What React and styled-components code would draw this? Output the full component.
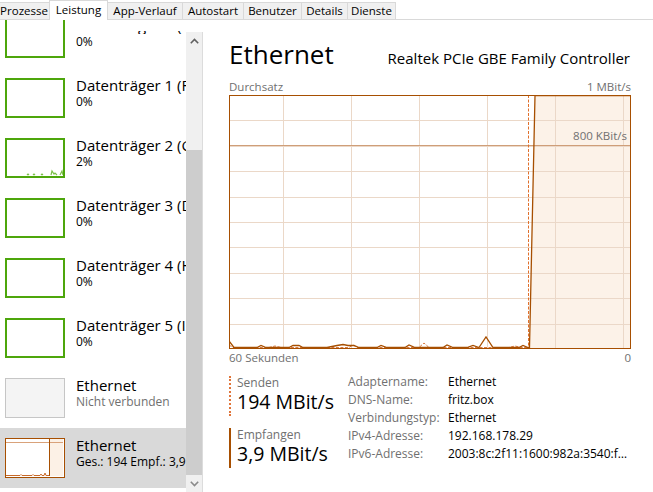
import { Fragment } from "react";
import styled, { createGlobalStyle } from "styled-components";

const GlobalStyle = createGlobalStyle`
  html, body {
    margin: 0;
    padding: 0;
    background: #ffffff;
  }
  body {
    font-family: "Segoe UI", "Open Sans", "Noto Sans", sans-serif;
    color: #000000;
  }
`;

const ORANGE = "#a74f01";
const GREEN = "#4da60c";
const GRAY_TEXT = "#707070";

const Window = styled.div`
  width: 653px;
  height: 492px;
  display: flex;
  flex-direction: column;
  overflow: hidden;
  background: #ffffff;
`;

/* ---------- tabs ---------- */

const TabBar = styled.div`
  height: 20px;
  display: flex;
  align-items: flex-end;
  flex-shrink: 0;
  box-shadow: inset 0 -1px 0 #d9d9d9;
`;

const Tab = styled.div`
  width: ${(p) => p.$w}px;
  height: ${(p) => (p.$active ? 20 : 18)}px;
  box-sizing: border-box;
  display: flex;
  align-items: ${(p) => (p.$active ? "flex-start" : "center")};
  justify-content: center;
  font-size: 11.5px;
  line-height: 16px;
  background: ${(p) => (p.$active ? "#ffffff" : "#f0f0f0")};
  border: 1px solid #d9d9d9;
  border-left: ${(p) => (p.$first ? "none" : "1px solid #d9d9d9")};
  border-bottom: ${(p) => (p.$active ? "none" : "1px solid #d9d9d9")};
  margin-left: -1px;
  padding-top: ${(p) => (p.$active ? 1 : 0)}px;
  white-space: nowrap;
  overflow: hidden;
`;

const tabs = [
  ["Prozesse", 51],
  ["Leistung", 59],
  ["App-Verlauf", 76],
  ["Autostart", 62],
  ["Benutzer", 59],
  ["Details", 47],
  ["Dienste", 49],
];

/* ---------- left list ---------- */

const Body = styled.div`
  flex: 1;
  display: flex;
  min-height: 0;
`;

const LeftPane = styled.div`
  width: 203px;
  display: flex;
  flex-shrink: 0;
`;

const List = styled.div`
  width: 186px;
  overflow: hidden;
`;

const ListInner = styled.div`
  margin-top: -12px;
`;

const Item = styled.div`
  height: 60px;
  box-sizing: border-box;
  padding: 10px 0 10px 5px;
  display: flex;
  gap: 11px;
  background: ${(p) => (p.$selected ? "#d9d9d9" : "transparent")};
`;

const Thumb = styled.div`
  width: 60px;
  height: 40px;
  flex-shrink: 0;
  box-sizing: border-box;
  border: ${(p) =>
    p.$kind === "off"
      ? "1px solid #c6c6c6"
      : p.$kind === "net"
      ? `1.5px solid ${ORANGE}`
      : `2px solid ${GREEN}`};
  background: ${(p) => (p.$kind === "off" ? "#f4f4f4" : "#ffffff")};
  overflow: hidden;
  svg {
    display: block;
  }
`;

const ItemText = styled.div`
  min-width: 0;
  display: flex;
  flex-direction: column;
  white-space: nowrap;
  overflow: hidden;
`;

const ItemTitle = styled.div`
  font-size: 15px;
  line-height: 18px;
  margin-top: -2px;
  clip-path: ${(p) => (p.$clipped ? "inset(15px 0 0 0)" : "none")};
`;

const ItemSub = styled.div`
  font-size: 12px;
  line-height: 15px;
  color: ${(p) => (p.$muted ? GRAY_TEXT : "#000000")};
`;

const Scrollbar = styled.div`
  width: 16px;
  margin-top: 12px;
  background: #f0f0f0;
  border-right: 1px solid #dcdcdc;
  display: flex;
  flex-direction: column;
`;

const ScrollArrow = styled.div`
  height: 17px;
  display: flex;
  align-items: center;
  justify-content: center;
  flex-shrink: 0;
`;

const ScrollTrack = styled.div`
  flex: 1;
  display: flex;
  flex-direction: column;
  padding-top: 101px;
`;

const ScrollThumb = styled.div`
  flex: 1;
  background: #cdcdcd;
`;

const Chevron = ({ up, color }) => (
  <svg width="9" height="6" viewBox="0 0 9 6">
    <path
      d={up ? "M0.8 5.2 L4.5 1.5 L8.2 5.2" : "M0.8 0.8 L4.5 4.5 L8.2 0.8"}
      fill="none"
      stroke={color}
      strokeWidth="1.6"
    />
  </svg>
);

const DiskSpark = () => (
  <svg width="56" height="36" viewBox="0 0 56 36">
    <path
      d="M20 35 L21 34 L22 35 M26 35 L27 34 L28 35 M34 35 L35 34 L36 35 M44 35 L45 31 L47 34 L48 33 L50 35 M53 35 L55 31 L56 35"
      fill="none"
      stroke="#7cc04a"
      strokeWidth="1.2"
    />
  </svg>
);

const NetSpark = () => (
  <svg width="57" height="37" viewBox="0 0 57 37">
    <rect x="43" y="0" width="14" height="37" fill="#fcf1e6" />
    <line x1="0" y1="3.5" x2="57" y2="3.5" stroke="#d9a27a" strokeWidth="1" />
    <line x1="43.5" y1="0" x2="43.5" y2="37" stroke={ORANGE} strokeWidth="1" />
    <path
      d="M0 36.5 L14 36.5 L15 35.5 L16 36.5 L26 36.5 L27 35.5 L28 36.5 L34 36.5 L35 35 L36 36.5 L38 36.5 L39 34 L40 36.5 L43 36.5"
      fill="none"
      stroke="#c86a2a"
      strokeWidth="1"
    />
  </svg>
);

const disks = [
  { title: "Datenträger 0 (C:)", sub: "0%" },
  { title: "Datenträger 1 (F:)", sub: "0%" },
  { title: "Datenträger 2 (G:)", sub: "2%", spark: true },
  { title: "Datenträger 3 (D:)", sub: "0%" },
  { title: "Datenträger 4 (H:)", sub: "0%" },
  { title: "Datenträger 5 (I:)", sub: "0%" },
];

/* ---------- right pane ---------- */

const RightPane = styled.div`
  flex: 1;
  min-width: 0;
  padding: 17px 22px 0 26px;
  display: flex;
  flex-direction: column;
`;

const Header = styled.div`
  display: flex;
  justify-content: space-between;
  align-items: baseline;
  height: 34px;
`;

const Title = styled.div`
  font-size: 26px;
  line-height: 34px;
  font-weight: 400;
`;

const Subtitle = styled.div`
  font-size: 15px;
  line-height: 20px;
  margin-right: 1px;
`;

const AxisRow = styled.div`
  display: flex;
  justify-content: space-between;
  font-size: 11.5px;
  line-height: 14px;
  color: ${GRAY_TEXT};
  margin-top: ${(p) => p.$top}px;
`;

const Chart = styled.div`
  position: relative;
  width: 402px;
  height: 254px;
  margin-top: 1px;
  svg {
    display: block;
  }
`;

const ChartNote = styled.div`
  position: absolute;
  right: 4px;
  top: 34px;
  font-size: 11.5px;
  line-height: 14px;
  color: ${GRAY_TEXT};
`;

const W = 402;
const H = 254;
const vLines = [54, 122, 190, 258, 326, 394];
const hLines = [1, 2, 3, 4, 5, 6, 7, 8, 9].map((k) => Math.round((H * k) / 10));

const recvPts = [
  [0, 246], [5, 252.5], [28, 252.5], [32, 250.5], [37, 252.5], [60, 252.5], [64, 250.5],
  [70, 250.5], [74, 252.5], [98, 252.5], [108, 250.5], [114, 249.5], [119, 250.5], [125, 250.5],
  [130, 252.5], [148, 252.5], [152, 250.5], [158, 252.5], [176, 252.5], [180, 250], [186, 252.5],
  [214, 252.5], [218, 250], [224, 252.5], [238, 252.5], [244, 250.5], [250, 252.5], [257, 242],
  [264, 252.5], [290, 252.5], [294, 250.5], [299, 252.5], [300.5, 252.5], [306, 0.5], [402, 0.5],
];

const sendPts = [
  [0, 250], [4, 252.5], [40, 252.5], [46, 251], [52, 252.5], [120, 252.5], [124, 250], [128, 252.5],
  [190, 252.5], [195, 248], [200, 252.5], [280, 252.5], [286, 251], [292, 252.5], [299.5, 252.5],
];

const toStr = (pts) => pts.map(([x, y]) => `${x},${y}`).join(" ");

const ThroughputChart = () => (
  <Chart>
    <svg width={W} height={H} viewBox={`0 0 ${W} ${H}`}>
      <rect x="0" y="0" width={W} height={H} fill="#ffffff" />
      <polygon points={`300.5,${H} 306,0 ${W},0 ${W},${H}`} fill="#fcf2e8" />
      {vLines.map((x) => (
        <line key={x} x1={x + 0.5} y1="0" x2={x + 0.5} y2={H} stroke="#ebd8c8" strokeWidth="1" />
      ))}
      {hLines.map((y) => (
        <line key={y} x1="0" y1={y + 0.5} x2={W} y2={y + 0.5} stroke="#ebd8c8" strokeWidth="1" />
      ))}
      <line x1="0" y1="50.5" x2={W} y2="50.5" stroke="#cf9e78" strokeWidth="1.2" />
      <polyline
        points={toStr(sendPts)}
        fill="none"
        stroke="#d9793f"
        strokeWidth="1"
        strokeDasharray="3 1.5"
      />
      <line x1="299.5" y1="0" x2="299.5" y2={H} stroke="#e0702c" strokeWidth="1" strokeDasharray="3 1.5" />
      <polyline points={toStr(recvPts)} fill="none" stroke={ORANGE} strokeWidth="1.3" />
      <rect x="0.5" y="0.5" width={W - 1} height={H - 1} fill="none" stroke={ORANGE} strokeWidth="1" />
    </svg>
    <ChartNote>800 KBit/s</ChartNote>
  </Chart>
);

const Stats = styled.div`
  display: flex;
  margin-top: 11px;
`;

const Rates = styled.div`
  width: 119px;
  display: flex;
  flex-direction: column;
  gap: 12px;
  flex-shrink: 0;
`;

const Rate = styled.div`
  height: 40px;
  box-sizing: border-box;
  padding-left: 6px;
  border-left: 2px ${(p) => (p.$dotted ? "dotted #e0753a" : `solid ${ORANGE}`)};
  display: flex;
  flex-direction: column;
`;

const RateLabel = styled.div`
  font-size: 12px;
  line-height: 13px;
  color: ${GRAY_TEXT};
`;

const RateValue = styled.div`
  font-size: 19.5px;
  line-height: 26px;
  white-space: nowrap;
`;

const Props = styled.div`
  display: grid;
  grid-template-columns: 100px 1fr;
  grid-auto-rows: 18px;
  margin-top: -3px;
  font-size: 12px;
  line-height: 18px;
  min-width: 0;
`;

const PropKey = styled.div`
  color: ${GRAY_TEXT};
  white-space: nowrap;
`;

const PropVal = styled.div`
  white-space: nowrap;
  overflow: hidden;
  text-overflow: ellipsis;
`;

const props = [
  ["Adaptername:", "Ethernet"],
  ["DNS-Name:", "fritz.box"],
  ["Verbindungstyp:", "Ethernet"],
  ["IPv4-Adresse:", "192.168.178.29"],
  ["IPv6-Adresse:", "2003:8c:2f11:1600:982a:3540:f009:8c1e"],
];

export default function App() {
  return (
    <Window>
      <GlobalStyle />
      <TabBar>
        {tabs.map(([label, w], i) => (
          <Tab key={label} $w={w} $first={i === 0} $active={label === "Leistung"}>
            {label}
          </Tab>
        ))}
      </TabBar>
      <Body>
        <LeftPane>
          <List>
            <ListInner>
              {disks.map((d, i) => (
                <Item key={d.title}>
                  <Thumb $kind="disk">{d.spark && <DiskSpark />}</Thumb>
                  <ItemText>
                    <ItemTitle $clipped={i === 0}>{d.title}</ItemTitle>
                    <ItemSub>{d.sub}</ItemSub>
                  </ItemText>
                </Item>
              ))}
              <Item>
                <Thumb $kind="off" />
                <ItemText>
                  <ItemTitle>Ethernet</ItemTitle>
                  <ItemSub $muted>Nicht verbunden</ItemSub>
                </ItemText>
              </Item>
              <Item $selected>
                <Thumb $kind="net">
                  <NetSpark />
                </Thumb>
                <ItemText>
                  <ItemTitle>Ethernet</ItemTitle>
                  <ItemSub>Ges.: 194 Empf.: 3,9 MBit/s</ItemSub>
                </ItemText>
              </Item>
            </ListInner>
          </List>
          <Scrollbar>
            <ScrollArrow>
              <Chevron up color="#606060" />
            </ScrollArrow>
            <ScrollTrack>
              <ScrollThumb />
            </ScrollTrack>
            <ScrollArrow>
              <Chevron color="#8a8a8a" />
            </ScrollArrow>
          </Scrollbar>
        </LeftPane>
        <RightPane>
          <Header>
            <Title>Ethernet</Title>
            <Subtitle>Realtek PCIe GBE Family Controller</Subtitle>
          </Header>
          <AxisRow $top={9}>
            <span>Durchsatz</span>
            <span>1 MBit/s</span>
          </AxisRow>
          <ThroughputChart />
          <AxisRow $top={2}>
            <span>60 Sekunden</span>
            <span>0</span>
          </AxisRow>
          <Stats>
            <Rates>
              <Rate $dotted>
                <RateLabel>Senden</RateLabel>
                <RateValue>194 MBit/s</RateValue>
              </Rate>
              <Rate>
                <RateLabel>Empfangen</RateLabel>
                <RateValue>3,9 MBit/s</RateValue>
              </Rate>
            </Rates>
            <Props>
              {props.map(([k, v]) => (
                <Fragment key={k}>
                  <PropKey>{k}</PropKey>
                  <PropVal>{v}</PropVal>
                </Fragment>
              ))}
            </Props>
          </Stats>
        </RightPane>
      </Body>
    </Window>
  );
}
